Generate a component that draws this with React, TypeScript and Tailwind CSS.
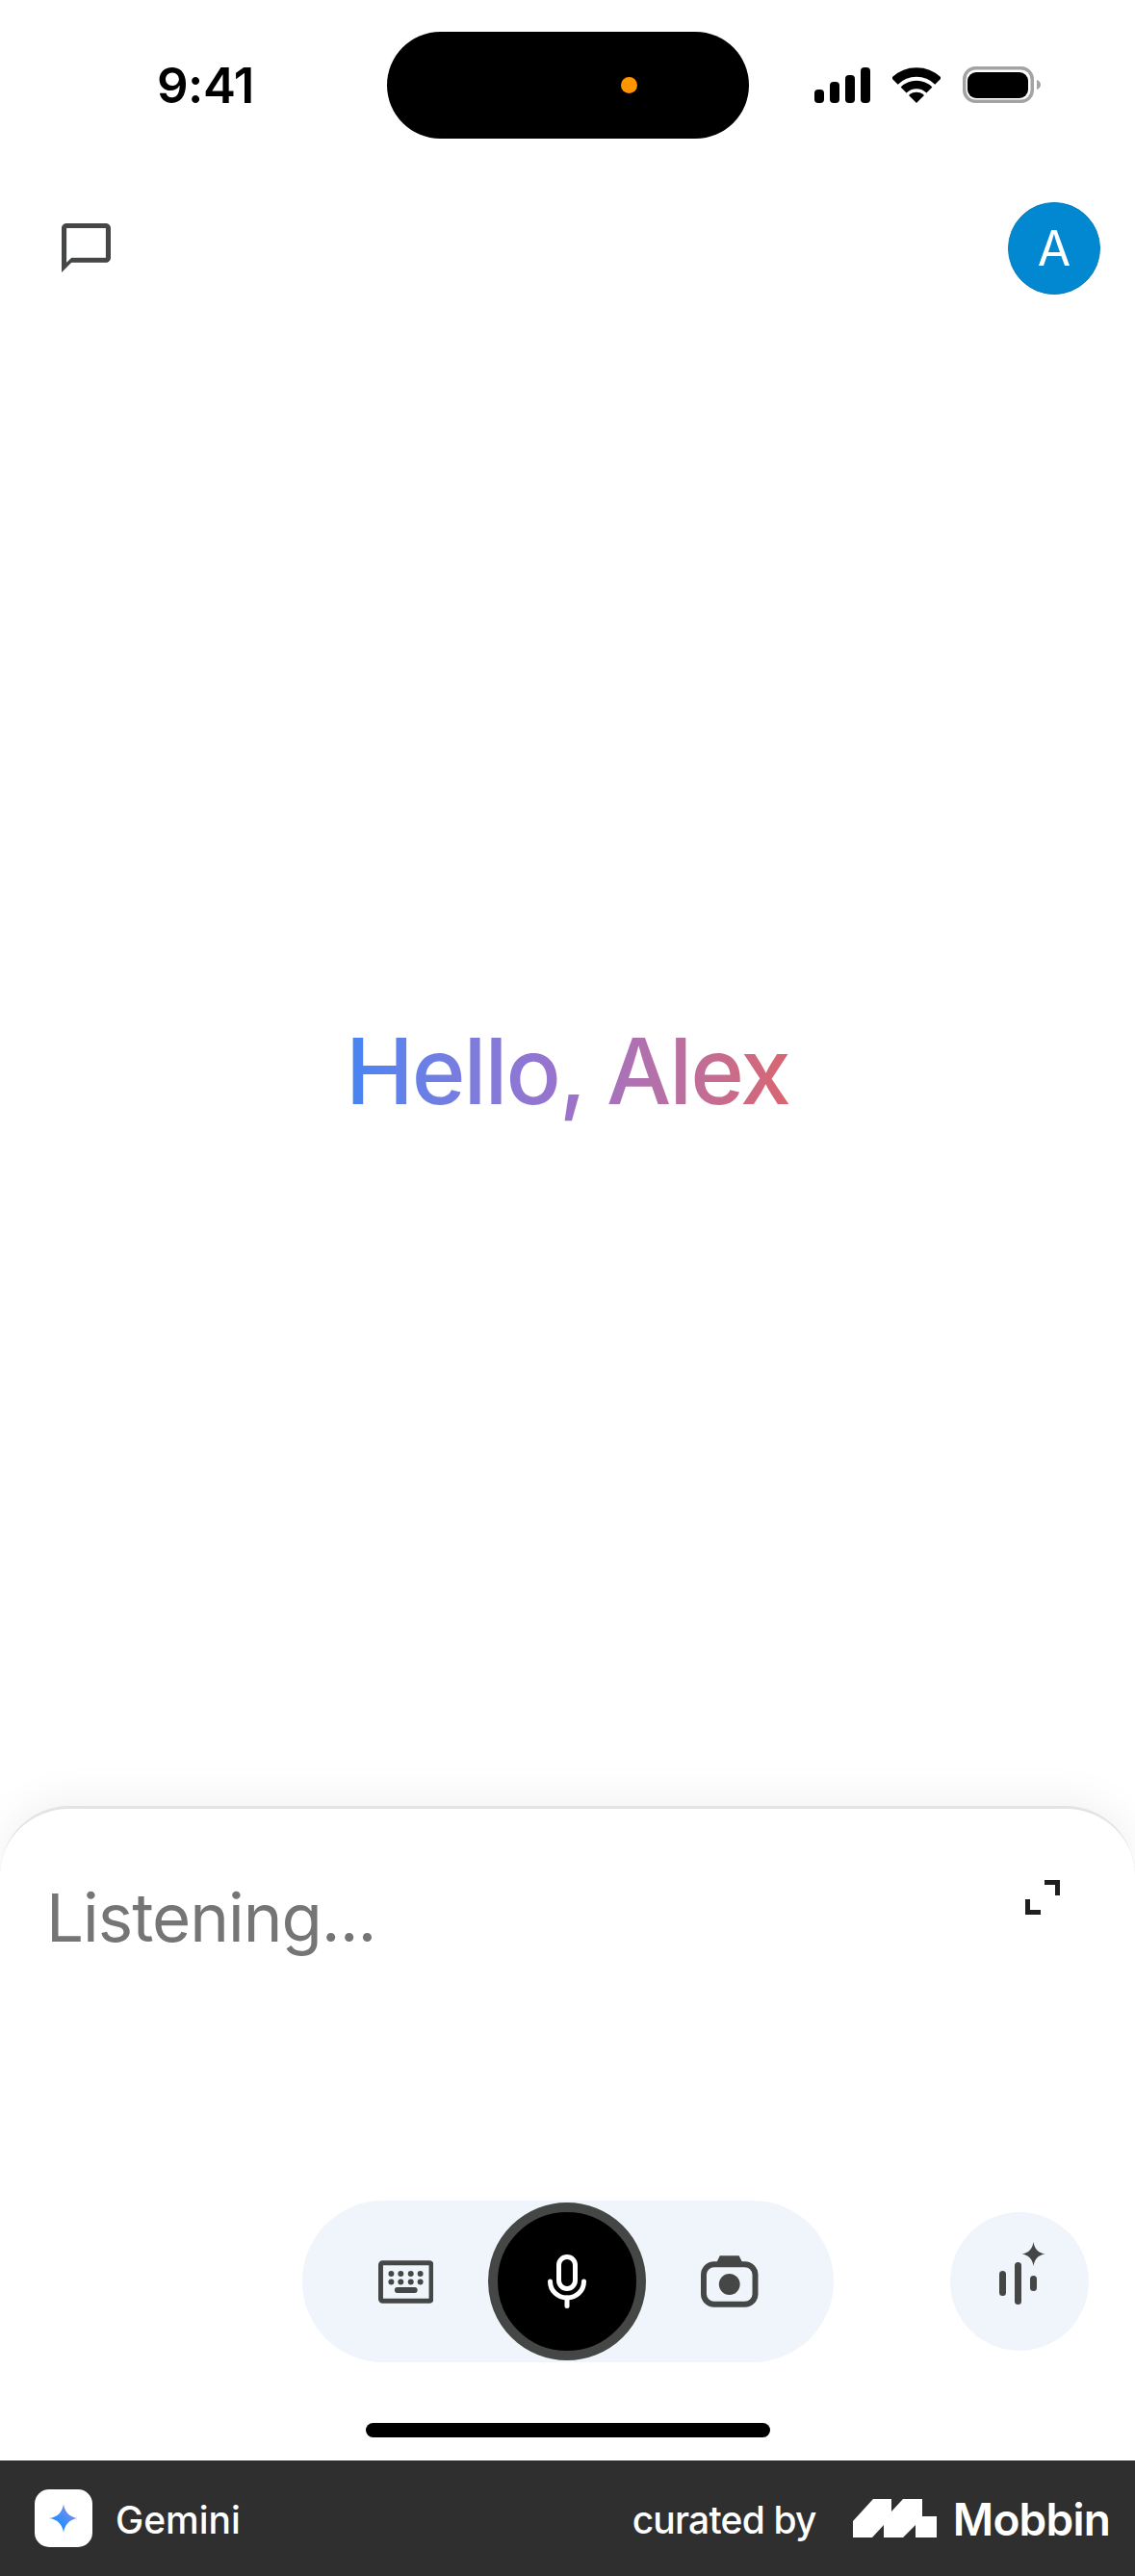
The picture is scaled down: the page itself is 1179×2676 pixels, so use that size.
import React from "react";

function SignalIcon() {
  return (
    <svg width="58" height="37" viewBox="0 0 58 37" fill="#000">
      <rect x="0" y="23" width="10" height="14" rx="4" />
      <rect x="16" y="15" width="10" height="22" rx="4" />
      <rect x="32" y="8" width="10" height="29" rx="4" />
      <rect x="48" y="0" width="10" height="37" rx="4" />
    </svg>
  );
}

function WifiIcon() {
  return (
    <svg width="50" height="37" viewBox="0 0 50 37" fill="none" stroke="#000">
      <path d="M2.4 14.4A32 32 0 0 1 47.6 14.4" strokeWidth="9.5" />
      <path d="M11.6 23.6A19 19 0 0 1 38.4 23.6" strokeWidth="8.5" />
      <path d="M25 37L17 29A11.3 11.3 0 0 1 33 29Z" fill="#000" stroke="none" />
    </svg>
  );
}

function BatteryIcon() {
  return (
    <svg width="81" height="38" viewBox="0 0 81 38">
      <rect x="1.75" y="1.75" width="70.5" height="34.5" rx="11.5" fill="none" stroke="#a3a3a3" strokeWidth="3.5" />
      <rect x="5" y="6" width="63" height="27" rx="9" fill="#000" />
      <path d="M77 14c2.4.8 4 2.8 4 5s-1.6 4.2-4 5z" fill="#a3a3a3" />
    </svg>
  );
}

function ChatIcon() {
  return (
    <svg width="51" height="51" viewBox="2 2 20 20" fill="#444746">
      <path d="M20 2H4c-1.1 0-2 .9-2 2v18l4-4h14c1.1 0 2-.9 2-2V4c0-1.1-.9-2-2-2zm0 14H6l-2 2V4h16v12z" />
    </svg>
  );
}

function ExpandIcon() {
  return (
    <svg width="36" height="36" viewBox="0 0 36 36" fill="none" stroke="#1f1f1f" strokeWidth="5">
      <path d="M20 2.5H33.5V16" />
      <path d="M2.5 20V33.5H16" />
    </svg>
  );
}

function KeyboardIcon() {
  const dotsX = [13.5, 23.5, 34, 44];
  return (
    <svg width="58" height="45" viewBox="0 0 58 45" fill="#444746">
      <rect x="2.5" y="2.5" width="53" height="40" rx="2" fill="none" stroke="#444746" strokeWidth="5" />
      {dotsX.map((x) => (
        <circle key={`a${x}`} cx={x} cy="14" r="3" />
      ))}
      {dotsX.map((x) => (
        <circle key={`b${x}`} cx={x} cy="22.5" r="3" />
      ))}
      <rect x="17" y="28" width="24" height="6" rx="3" />
    </svg>
  );
}

function MicIcon() {
  return (
    <svg width="40" height="56" viewBox="0 0 40 56" fill="none" stroke="#fff" strokeWidth="5" strokeLinecap="round">
      <rect x="11.5" y="2.5" width="17" height="33" rx="8.5" />
      <path d="M2.5 28C2.5 37.5 10 45 20 45S37.5 37.5 37.5 28" />
      <path d="M20 45V53.5" />
    </svg>
  );
}

function CameraIcon() {
  return (
    <svg width="60" height="54" viewBox="0 0 60 54" fill="#444746">
      <path d="M20 0H40L44 8H16Z" />
      <rect x="3" y="9" width="54" height="42" rx="11" fill="none" stroke="#444746" strokeWidth="6" />
      <circle cx="30" cy="30" r="11" />
    </svg>
  );
}

function VoiceIcon() {
  return (
    <svg width="60" height="90" viewBox="0 0 60 90" fill="#444746">
      <rect x="9" y="34" width="7" height="26" rx="3.5" />
      <rect x="25" y="25" width="7" height="44" rx="3.5" />
      <rect x="41" y="39" width="7" height="16" rx="3.5" />
      <path d="M44.5 4C45.5 11 49.5 15.5 56.5 16.5C49.5 17.5 45.5 22 44.5 29C43.5 22 39.5 17.5 32.5 16.5C39.5 15.5 43.5 11 44.5 4Z" />
    </svg>
  );
}

function MobbinLogo() {
  return (
    <svg width="87" height="40" viewBox="0 0 87 40" fill="#fff">
      <path d="M0 40V23L21 0H40V13L52 0H72V18H87V40H65V27L52 40H32V27L20 40Z" />
    </svg>
  );
}

export default function App() {
  return (
    <div className="flex h-[2676px] w-[1179px] flex-col overflow-hidden bg-white font-['Inter',sans-serif]">
      {/* status bar */}
      <div className="flex h-[144px] items-start pt-[33px]">
        <div className="flex h-[111px] w-[402px] items-center pl-[163px]">
          <span className="text-[51px] font-semibold leading-none tracking-[-0.5px] text-black">9:41</span>
        </div>
        <div className="flex h-[111px] w-[376px] items-center justify-end rounded-full bg-black pr-[116px]">
          <div className="h-[17px] w-[17px] rounded-full bg-[#ff9500]" />
        </div>
        <div className="flex h-[111px] items-center pb-[1px] pl-[68px]">
          <SignalIcon />
          <div className="ml-[23px]">
            <WifiIcon />
          </div>
          <div className="ml-[23px]">
            <BatteryIcon />
          </div>
        </div>
      </div>

      {/* top actions */}
      <div className="flex items-start justify-between pl-[64px] pr-[36px] pt-[66px]">
        <div className="mt-[22px]">
          <ChatIcon />
        </div>
        <div className="flex h-[96px] w-[96px] items-center justify-center rounded-full border border-[#0b7dbd] bg-[#0288d1] text-[50px] leading-none text-white">
          A
        </div>
      </div>

      {/* greeting */}
      <div className="flex flex-1 items-center justify-center pt-[44px]">
        <h1 className="bg-linear-to-r from-[#4285f4] via-[#9b72cb] to-[#d96570] bg-clip-text text-[95px] font-medium leading-[1.2] tracking-[-2px] text-transparent">
          Hello, Alex
        </h1>
      </div>

      {/* input sheet */}
      <div className="flex h-[680px] flex-col rounded-t-[72px] border-t-[3px] border-[#e3e3e3] bg-white shadow-[0_-10px_40px_rgba(0,0,0,0.05)]">
        <div className="flex items-start justify-between pl-[48px] pr-[78px] pt-[74px]">
          <span className="mt-[5px] text-[69px] leading-none tracking-[-1px] text-[#757575]">Listening...</span>
          <ExpandIcon />
        </div>
        <div className="mt-[259px] grid grid-cols-[1fr_auto_1fr] items-center">
          <div />
          <div className="flex h-[168px] w-[552px] items-center rounded-full bg-[#f0f5fb] pl-[79px] pr-[78px]">
            <KeyboardIcon />
            <div className="mx-[57px] flex h-[164px] w-[164px] shrink-0 items-center justify-center rounded-full border-[10px] border-[#444746] bg-black">
              <MicIcon />
            </div>
            <CameraIcon />
          </div>
          <div className="flex justify-end pr-[48px]">
            <div className="flex h-[144px] w-[144px] items-center justify-center rounded-full bg-[#f0f5fb]">
              <VoiceIcon />
            </div>
          </div>
        </div>
        <div className="mt-[63px] flex justify-center">
          <div className="h-[15px] w-[420px] rounded-full bg-black" />
        </div>
      </div>

      {/* footer */}
      <div className="flex h-[120px] items-center justify-between bg-[#2f2f2f] pl-[36px] pr-[26px] text-white">
        <div className="flex items-center">
          <div className="flex h-[60px] w-[60px] items-center justify-center rounded-[15px] bg-white">
            <svg width="30" height="30" viewBox="0 0 30 30">
              <defs>
                <linearGradient id="geminiStar" x1="0" y1="1" x2="1" y2="0">
                  <stop offset="0.3" stopColor="#1f8fff" />
                  <stop offset="1" stopColor="#a78bdf" />
                </linearGradient>
              </defs>
              <path d="M15 0C16 8 21 14 30 15C21 16 16 22 15 30C14 22 9 16 0 15C9 14 14 8 15 0Z" fill="url(#geminiStar)" />
            </svg>
          </div>
          <span className="ml-[24px] mt-[2px] text-[39px] font-medium leading-none">Gemini</span>
        </div>
        <div className="flex items-center">
          <span className="mt-[2px] text-[39px] font-medium leading-none tracking-[-0.8px]">curated by</span>
          <div className="ml-[38px]">
            <MobbinLogo />
          </div>
          <span className="ml-[17px] mt-[2px] text-[46px] font-semibold leading-none tracking-[-0.8px]">Mobbin</span>
        </div>
      </div>
    </div>
  );
}
